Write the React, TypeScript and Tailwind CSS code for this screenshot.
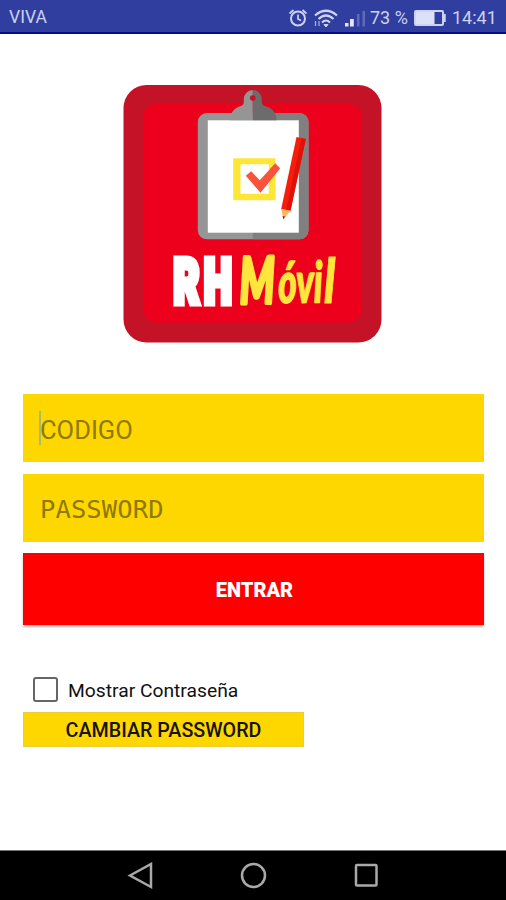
import React from "react";

function StatusBar() {
  return (
    <header className="flex h-[34px] shrink-0 items-center border-b-2 border-[#060a8c] bg-[#303f9f] pt-[3px] pl-[9px] text-[17.5px] leading-none text-[#ccd2f0]">
      <span className="pt-px text-[17.5px]">VIVA</span>
      <svg className="ml-auto h-[22px] w-[20px] shrink-0" viewBox="0 0 20 22" fill="none" stroke="currentColor" strokeWidth="2">
        <circle cx="10" cy="11.5" r="7" />
        <path d="M10 7.5V12l3 1.5M1.5 6.500L5.500 3M18.500 6.500L14.500 3" strokeWidth="1.700" />
      </svg>
      <svg className="ml-[5px] h-[22px] w-[26px] shrink-0" viewBox="0 0 26 22" fill="none" stroke="currentColor" strokeWidth="2.200">
        <path d="M2 8.500Q13-1 24 8.500M5.500 12Q13 5 20.500 12M9 15.500Q13 11.500 17 15.500" />
        <path d="M11 17.500h4l-2 2.500z" fill="currentColor" strokeWidth="1" />
        <path d="M2.500 19v-5M6 14v5" strokeWidth="1.200" opacity=".8" />
      </svg>
      <svg className="ml-[5px] h-[22px] w-[22px] shrink-0" viewBox="0 0 22 22" fill="currentColor">
        <path d="M1 16h3.500v3.500H1zM6 12h3.800v7.500H6z" fill="#e4e8ff" />
        <path d="M13 7h2.500v12.500H13zM18.500 4H21v15.500h-2.500z" opacity=".3" />
      </svg>
      <span className="ml-[4px] w-[39px] pt-px whitespace-nowrap text-[18px]">73 %</span>
      <svg className="ml-[4px] h-[20px] w-[34px] shrink-0" viewBox="0 0 34 20" fill="none">
        <rect x="2" y="3" width="28" height="14" rx="1" stroke="#ccd2f0" strokeWidth="2" />
        <rect x="3" y="4" width="18.500" height="12" fill="#dde1f8" />
        <path d="M31.500 6v8" stroke="#ccd2f0" strokeWidth="2.500" />
      </svg>
      <span className="mr-[9px] ml-[5px] w-[45px] pt-px whitespace-nowrap text-[18px]">14:41</span>
    </header>
  );
}

function Logo() {
  return (
    <svg className="mt-[51px] ml-[100px] h-[258px] w-[259px] shrink-0" viewBox="-0.5 0 259 258" role="img" aria-label="RH Móvil">
      <rect width="258" height="257.500" rx="23" fill="#c41226" />
      <rect x="20" y="18.500" width="218" height="219" rx="13" fill="#ec001c" />
      <rect x="74.300" y="28" width="110.700" height="126.300" rx="9" fill="#969696" />
      <path d="M129.300 28H176a9 9 0 0 1 9 9V145.300a9 9 0 0 1-9 9H129.300Z" fill="#808080" />
      <rect x="84.300" y="35.300" width="91" height="112.400" fill="#fff" />
      <path d="M129.300 5a9 9 0 0 0-9 9v3q0 3-3 4c-7 2-10.600 7-10.600 14.300h22.600Z" fill="#959595" />
      <path d="M129.300 5a9 9 0 0 1 9 9v3q0 3 3 4c8 2 11.700 7 11.700 14.300h-23.700Z" fill="#6c6c6c" />
      <circle cx="129.300" cy="13" r="2.800" fill="#c41226" />
      <path d="M109.700 73.300H152v42H109.700ZM117 79.300v29.400h28.300V79.300Z" fill="#fee638" fillRule="evenodd" />
      <path d="m122.300 90.700 5.400-4.400 8.600 9 15.400-17 5 5L137 107.700Z" fill="#f9533b" />
      <path d="m173 52 9.300 2L167 125.700l-9.300-1.700Z" fill="#f71d0d" />
      <path d="m178 53 4.300 1L167 125.700l-4.300-.8Z" fill="#df1108" />
      <path d="m157.700 124 9.300 1.700-7 8.600Z" fill="#f8b85b" />
      <path d="m159 131 2.600.6-1.600 3Z" fill="#c41226" />
      <g fill="#fff" stroke="#fff" strokeWidth="7" fontFamily="Roboto, sans-serif" fontWeight="900" fontSize="61">
        <text transform="translate(50 217.500) scale(.65 1)">R</text>
        <text transform="translate(80.500 217.500) scale(.65 1)">H</text>
      </g>
      <g fill="#ffe63d" stroke="#ffe63d" strokeLinejoin="round" strokeLinecap="round" fontFamily="Lato, sans-serif" fontWeight="900" fontStyle="italic">
        <text transform="translate(116.500 218.500) rotate(-1) scale(.62 1)" fontSize="64" strokeWidth="4">M</text>
        <text transform="translate(155 218) rotate(-1) scale(.62 1)" fontSize="57" strokeWidth="1.500">óvi</text>
        <text transform="translate(200.500 218) scale(.76 1)" fontSize="61" strokeWidth="1">l</text>
      </g>
    </svg>
  );
}

export default function App() {
  return (
    <div className="flex h-[900px] w-[506px] flex-col overflow-hidden bg-white font-[Roboto,sans-serif]">
      <StatusBar />
      <main className="flex flex-1 flex-col pr-[22px] pl-[23px]">
        <Logo />
        <div className="mt-[51px] flex h-[68px] items-center bg-[#ffd700] pl-[16px] text-[#8f7900]">
          <span className="h-[34px] w-[2px] bg-[#a9bd6d]" />
          <span className="-ml-px pt-[5px] text-[25.500px] leading-none">CODIGO</span>
        </div>
        <div className="mt-[12px] flex h-[68px] items-center bg-[#ffd700] pt-[4px] pl-[17px] font-['DejaVu_Sans_Mono',monospace] text-[25.500px] leading-none tracking-[0.1px] text-[#8f7900]">
          PASSWORD
        </div>
        <button className="mt-[11px] h-[72px] shrink-0 bg-[#ff0000] pt-[1px] pl-[2px] text-[20px] leading-none font-black text-white shadow-[0_2px_2px_rgba(0,0,0,0.28)]">
          ENTRAR
        </button>
        <label className="mt-[52px] ml-[10px] flex h-[25px] items-center">
          <span className="h-[25px] w-[25px] rounded-[3px] border-2 border-[#666]" />
          <span className="ml-[10px] pt-[2px] text-[19.250px] leading-none text-[#111]">Mostrar Contraseña</span>
        </label>
        <button className="mt-[10px] h-[35px] w-[281px] border border-[#e9cd3b] bg-[#ffd700] pt-[2px] text-[19.700px] leading-none font-medium text-[#17130a]">
          CAMBIAR PASSWORD
        </button>
      </main>
      <nav className="flex h-[50px] shrink-0 items-center justify-center gap-[86px] border-t border-[#777] bg-black text-[#a9a9a9]">
        <svg className="h-[28px] w-[28px]" viewBox="0 0 28 28" fill="none" stroke="currentColor" strokeWidth="2.500">
          <path d="M5 13.500 26 2v23Z" />
        </svg>
        <svg className="h-[28px] w-[28px]" viewBox="0 0 28 28" fill="none" stroke="currentColor" strokeWidth="2.500">
          <circle cx="14.500" cy="13.500" r="11.500" />
        </svg>
        <svg className="h-[28px] w-[28px]" viewBox="0 0 28 28" fill="none" stroke="currentColor" strokeWidth="2.500">
          <rect x="3" y="3" width="20.500" height="20.500" rx="1" />
        </svg>
      </nav>
    </div>
  );
}
